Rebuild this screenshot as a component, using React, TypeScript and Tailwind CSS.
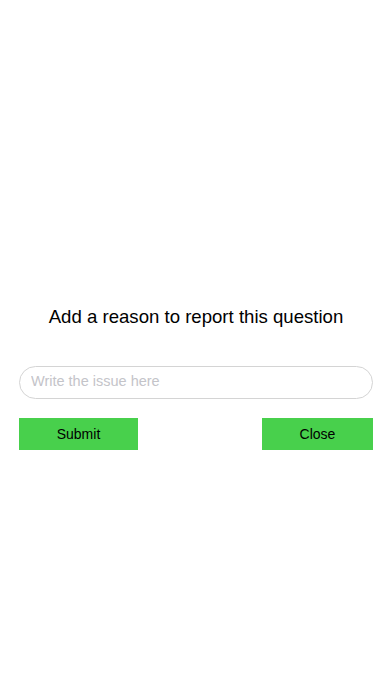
export default function App() {
  return (
    <div
      className="h-[696px] w-full bg-white"
      style={{ fontFamily: "'Liberation Sans', Arial, sans-serif" }}
    >
      <div className="flex flex-col px-[19px] pt-[304px]">
        <h1 className="text-center text-[18.6px] leading-[26px] text-black">
          Add a reason to report this question
        </h1>

        <input
          className="mt-[36px] h-[33px] w-full rounded-full border border-[#d4d4d4] px-[11px] pb-[4px] text-[14.5px] text-black outline-none placeholder:text-[#c4c4c9]"
          placeholder="Write the issue here"
        />

        <div className="mt-[19px] flex justify-between">
          <button className="h-[32px] w-[119px] bg-[#48d04c] text-[14px] text-black">
            Submit
          </button>
          <button className="h-[32px] w-[111px] bg-[#48d04c] text-[14px] text-black">
            Close
          </button>
        </div>
      </div>
    </div>
  );
}
